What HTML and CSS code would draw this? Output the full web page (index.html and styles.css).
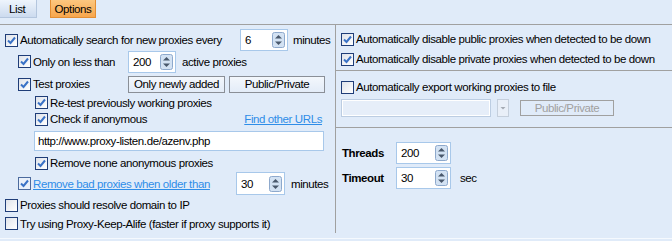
FILE: index.html
```html
<!DOCTYPE html>
<html lang="en">
<head>
  <meta charset="UTF-8" />
  <title>Proxy Options</title>
  <link rel="stylesheet" href="styles.css">
</head>
<body>
  <div class="tabs">
    <span class="tab">List</span>
    <span class="tab tab-active">Options</span>
  </div>

  <div class="panes">
    <div class="pane-left">
      <div class="row r1 ind0">
        <label class="check w235"><span class="cb on"><svg viewBox="0 0 11 11"><polyline points="2,5.5 4.5,8 9,2.5"/></svg></span>Automatically search for new proxies every</label>
        <span class="spin w48"><span>6</span><svg class="arrows" viewBox="0 0 13 16"><rect x="0.5" y="0.5" width="12" height="15" rx="2"/><polygon points="3,6.5 6.5,3 10,6.5"/><polygon points="3,9.5 6.5,13 10,9.5"/></svg></span>
        <span class="after">minutes</span>
      </div>

      <div class="row r2 ind1">
        <label class="check w110"><span class="cb on"><svg viewBox="0 0 11 11"><polyline points="2,5.5 4.5,8 9,2.5"/></svg></span>Only on less than</label>
        <span class="spin w48"><span>200</span><svg class="arrows" viewBox="0 0 13 16"><rect x="0.5" y="0.5" width="12" height="15" rx="2"/><polygon points="3,6.5 6.5,3 10,6.5"/><polygon points="3,9.5 6.5,13 10,9.5"/></svg></span>
        <span class="after wide">active proxies</span>
      </div>

      <div class="row r3 ind1">
        <label class="check w110"><span class="cb on"><svg viewBox="0 0 11 11"><polyline points="2,5.5 4.5,8 9,2.5"/></svg></span>Test proxies</label>
        <span class="btn b97">Only newly added</span>
        <span class="btn b96">Public/Private</span>
      </div>

      <div class="row r4 ind2">
        <label class="check"><span class="cb on"><svg viewBox="0 0 11 11"><polyline points="2,5.5 4.5,8 9,2.5"/></svg></span>Re-test previously working proxies</label>
      </div>

      <div class="row r5 ind2">
        <label class="check grow"><span class="cb on"><svg viewBox="0 0 11 11"><polyline points="2,5.5 4.5,8 9,2.5"/></svg></span>Check if anonymous</label>
        <a class="link" href="#">Find other URLs</a>
      </div>

      <div class="row r6">
        <span class="textbox">http://www.proxy-listen.de/azenv.php</span>
      </div>

      <div class="row r7 ind2">
        <label class="check"><span class="cb on"><svg viewBox="0 0 11 11"><polyline points="2,5.5 4.5,8 9,2.5"/></svg></span>Remove none anonymous proxies</label>
      </div>

      <div class="row r8 ind1">
        <label class="check w218"><span class="cb on flat"><svg viewBox="0 0 11 11"><polyline points="2,5.5 4.5,8 9,2.5"/></svg></span><a class="link" href="#">Remove bad proxies when older than</a></label>
        <span class="spin w49 tall"><span>30</span><svg class="arrows" viewBox="0 0 13 16"><rect x="0.5" y="0.5" width="12" height="15" rx="2"/><polygon points="3,6.5 6.5,3 10,6.5"/><polygon points="3,9.5 6.5,13 10,9.5"/></svg></span>
        <span class="after wide">minutes</span>
      </div>

      <div class="row r9 ind0">
        <label class="check"><span class="cb"></span>Proxies should resolve domain to IP</label>
      </div>

      <div class="row r10 ind0">
        <label class="check"><span class="cb"></span>Try using Proxy-Keep-Alife (faster if proxy supports it)</label>
      </div>
    </div>

    <div class="pane-right">
      <div class="section s1">
        <div class="row rr">
          <label class="check"><span class="cb on"><svg viewBox="0 0 11 11"><polyline points="2,5.5 4.5,8 9,2.5"/></svg></span>Automatically disable public proxies when detected to be down</label>
        </div>
        <div class="row rr">
          <label class="check"><span class="cb on"><svg viewBox="0 0 11 11"><polyline points="2,5.5 4.5,8 9,2.5"/></svg></span>Automatically disable private proxies when detected to be down</label>
        </div>
      </div>

      <div class="section s2">
        <div class="row rr export">
          <label class="check"><span class="cb"></span>Automatically export working proxies to file</label>
        </div>
        <div class="row rr combo-row">
          <span class="combo"></span>
          <span class="drop"><svg viewBox="0 0 10 16"><polygon points="2.5,7 7.5,7 5,9.5"/></svg></span>
          <span class="btn disabled">Public/Private</span>
        </div>
      </div>

      <div class="section s3">
        <div class="row field threads">
          <span class="field-label">Threads</span>
          <span class="spin w55"><span>200</span><svg class="arrows" viewBox="0 0 13 16"><rect x="0.5" y="0.5" width="12" height="15" rx="2"/><polygon points="3,6.5 6.5,3 10,6.5"/><polygon points="3,9.5 6.5,13 10,9.5"/></svg></span>
        </div>
        <div class="row field timeout">
          <span class="field-label">Timeout</span>
          <span class="spin w55"><span>30</span><svg class="arrows" viewBox="0 0 13 16"><rect x="0.5" y="0.5" width="12" height="15" rx="2"/><polygon points="3,6.5 6.5,3 10,6.5"/><polygon points="3,9.5 6.5,13 10,9.5"/></svg></span>
          <span class="after sec">sec</span>
        </div>
      </div>
    </div>
  </div>

  <div class="base"></div>
</body>
</html>
```

FILE: styles.css
```css
body {
  margin: 0;
  width: 672px;
  height: 241px;
  overflow: hidden;
  background: #e0ebf9;
  font-family: "Liberation Sans", Arial, sans-serif;
  font-size: 11.5px;
  letter-spacing: -0.4px;
  color: #000;
}

/* tabs */
.tabs {
  height: 24px;
  display: flex;
  gap: 13px;
  align-items: flex-start;
  border-bottom: 1px solid #a0a0a0;
}

.tab {
  height: 18px;
  line-height: 18px;
  box-sizing: border-box;
  padding: 0 9px;
  width: 37px;
  background: linear-gradient(#eef4fc, #ccdbef);
  border-right: 1px solid #b4c6de;
  border-bottom: 1px solid #b4c6de;
}

.tab-active {
  width: 46px;
  padding: 0 2px;
  text-align: center;
  background: linear-gradient(#fcc77f, #f7a64d);
  border: 1px solid #e38e33;
  border-top: none;
}

/* panes */
.panes {
  display: flex;
  height: 208px;
}

.pane-left {
  width: 335px;
  flex: none;
  border-right: 1px solid #a0a0a0;
  padding-top: 4px;
}

.pane-right {
  flex: 1;
}

.base {
  margin-top: 5px;
  border-top: 1px solid #f5f9fe;
  height: 3px;
}

.row {
  display: flex;
  align-items: center;
  white-space: nowrap;
  box-sizing: border-box;
}

.ind0 { padding-left: 5px; }
.ind1 { padding-left: 18px; }
.ind2 { padding-left: 35px; }

.r1 { height: 22px; }
.r2 { height: 21px; }
.r3 { height: 20px; margin-top: 2px; }
.r4 { height: 17px; }
.r5 { height: 16px; padding-right: 13px; }
.r6 { height: 20px; margin-top: 4px; padding-left: 34px; }
.r7 { height: 18px; margin-top: 3px; }
.r8 { height: 23px; }
.r9 { height: 18px; margin-top: 1px; }
.r10 { height: 19px; }

/* checkbox */
.check {
  display: flex;
  align-items: center;
}

.w235 { width: 235px; }
.w110 { width: 110px; }
.w218 { width: 218px; }
.grow { flex: 1; }

.cb {
  width: 13px;
  height: 13px;
  flex: none;
  box-sizing: border-box;
  border: 1px solid #1f3d78;
  background: linear-gradient(135deg, #dfe3ea, #fff);
  margin-right: 2px;
  display: flex;
}

.cb svg {
  width: 11px;
  height: 11px;
}

.cb polyline {
  fill: none;
  stroke: #3a72c6;
  stroke-width: 2;
}

.cb.flat {
  border-color: #4b6a9e;
  background: #e9f0fa;
}

/* spin edits */
.spin {
  height: 22px;
  box-sizing: border-box;
  display: flex;
  align-items: center;
  justify-content: space-between;
  border: 1px solid #a8c8ea;
  background: #fff;
  padding: 0 2px 0 4px;
}

.spin.tall { height: 23px; }

.w48 { width: 48px; }
.w49 { width: 49px; }
.w55 { width: 55px; }

.arrows {
  width: 13px;
  height: 16px;
}

.arrows rect {
  fill: #d3e2f3;
  stroke: #8ea9cc;
}

.arrows polygon {
  fill: #49586c;
}

.after { margin-left: 5px; }
.after.wide { margin-left: 6px; }
.after.sec { margin-left: 9px; }

/* buttons */
.btn {
  height: 17px;
  line-height: 15px;
  box-sizing: border-box;
  text-align: center;
  border: 1px solid #8a8f97;
  background: linear-gradient(#f3f7fc, #e3ecf8);
}

.b97 { width: 97px; }
.b96 { width: 96px; margin-left: 4px; }

.link {
  color: #2f8de8;
  text-decoration: underline;
}

.textbox {
  width: 290px;
  height: 20px;
  line-height: 18px;
  box-sizing: border-box;
  border: 1px solid #a8c8ea;
  background: #fff;
  padding-left: 3px;
}

/* right side */
.section { border-bottom: 1px solid #a0a0a0; }
.s1 { padding: 4px 0 1px; }
.s2 { padding: 7px 0 10px; }
.s3 { border-bottom: none; }

.rr {
  height: 20px;
  padding-left: 5px;
}

.export { height: 18px; }

.combo-row {
  height: 18px;
  margin-top: 3px;
}

.combo {
  width: 150px;
  height: 18px;
  box-sizing: border-box;
  border: 1px solid #bccde2;
  box-shadow: inset 0 0 0 1px #fff;
  background: #e6eef9;
}

.drop {
  width: 12px;
  height: 18px;
  margin-left: 6px;
  box-sizing: border-box;
  border: 1px solid #c5cfdc;
  background: #e9eff8;
  display: flex;
}

.drop svg {
  width: 10px;
  height: 16px;
}

.drop polygon { fill: #a4aab3; }

.btn.disabled {
  width: 94px;
  height: 16px;
  margin-left: 11px;
  color: #a0a0a0;
  border-color: #a0a0a0;
  background: #e0ebf9;
}

.field {
  height: 21px;
  padding-left: 6px;
}

.threads { margin-top: 14px; }
.timeout { margin-top: 4px; }

.field-label {
  width: 54px;
  font-weight: bold;
}
```
